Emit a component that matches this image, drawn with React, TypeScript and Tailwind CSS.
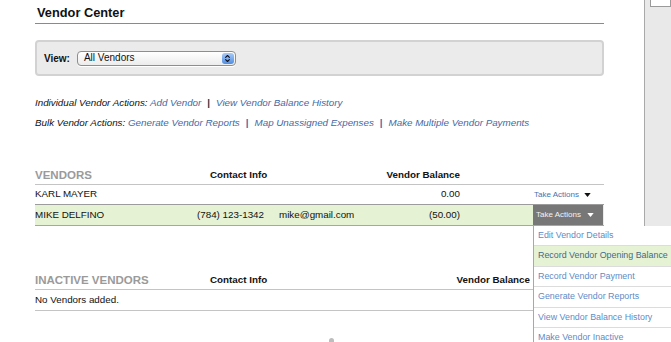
import { ChevronsUpDown } from 'lucide-react';

const font = { fontFamily: '"Liberation Sans", Arial, sans-serif' };

function Caret({ className }: { className: string }) {
    return (
        <svg viewBox="0 0 8 5" className={className}>
            <path d="M0 0 L8 0 L4 5 Z" fill="currentColor" />
        </svg>
    );
}

const menuItems = [
    'Edit Vendor Details',
    'Record Vendor Opening Balance',
    'Record Vendor Payment',
    'Generate Vendor Reports',
    'View Vendor Balance History',
    'Make Vendor Inactive',
];

export default function App() {
    return (
        <div className="flex w-[671px] h-[342px] overflow-hidden bg-white text-[#111]" style={font}>
            {/* Main column */}
            <div className="w-[644px] shrink-0 pl-[35px] pr-[40px]">
                <div className="h-[24px] border-b border-[#8a8a8a] pt-[5px] pl-[2px] text-[12.8px] font-bold leading-[16px]">
                    Vendor Center
                </div>

                <div className="mt-[16px] h-[36px] rounded-[4px] border-2 border-[#d2d2d2] bg-[#ebebeb] flex items-center pl-[7px] gap-[7px]">
                    <span className="text-[10px] font-bold">View:</span>
                    <div className="h-[15px] w-[159px] rounded-[4px] border border-[#8e8e8e] bg-gradient-to-b from-white to-[#ececec] flex items-center justify-between pl-[6px] pr-[1px] shadow-[0_1px_0_#fff]">
                        <span className="text-[10px] leading-none">All Vendors</span>
                        <span className="h-[11px] w-[12px] rounded-[3px] bg-gradient-to-b from-[#a9c9f5] to-[#4f8de0] flex items-center justify-center text-[#112]">
                            <ChevronsUpDown className="w-[9px] h-[9px]" strokeWidth={3} />
                        </span>
                    </div>
                </div>

                <div className="mt-[17px] text-[9.8px] italic leading-[20px] whitespace-nowrap">
                    <div>
                        Individual Vendor Actions: <span className="text-[#3f6aa6]">Add Vendor</span>
                        <span className="mx-[6px] not-italic font-bold text-[#333]">|</span>
                        <span className="text-[#3f6aa6]">View Vendor Balance History</span>
                    </div>
                    <div>
                        Bulk Vendor Actions: <span className="text-[#3f6aa6]">Generate Vendor Reports</span>
                        <span className="mx-[6px] not-italic font-bold text-[#3f6aa6]">|</span>
                        <span className="text-[#3f6aa6]">Map Unassigned Expenses</span>
                        <span className="mx-[6px] not-italic font-bold text-[#3f6aa6]">|</span>
                        <span className="text-[#3f6aa6]">Make Multiple Vendor Payments</span>
                    </div>
                </div>

                {/* Vendors table */}
                <div className="mt-[34px] text-[9.8px] whitespace-nowrap">
                    <div className="h-[18px] flex items-center border-b border-[#c4c4c4]">
                        <div className="w-[162px] text-[11.5px] font-bold text-[#9a9a9a]">VENDORS</div>
                        <div className="w-[190px] pl-[13px] font-bold">Contact Info</div>
                        <div className="w-[73px] flex justify-end font-bold">Vendor Balance</div>
                    </div>
                    <div className="h-[20px] flex items-center border-b border-[#9c9c9c]">
                        <div className="w-[162px]">KARL MAYER</div>
                        <div className="w-[190px]" />
                        <div className="w-[73px] text-right">0.00</div>
                        <div className="w-[73px]" />
                        <div className="w-[70px] flex items-center pl-[1px] text-[8px] text-[#4a72ad]">
                            Take Actions
                            <Caret className="ml-[5px] w-[7px] h-[4px] text-[#111]" />
                        </div>
                    </div>
                    <div className="h-[21px] flex items-center border-b border-[#a6a6a6] bg-[#e6f2d4]">
                        <div className="w-[162px]">MIKE DELFINO</div>
                        <div className="w-[190px] flex gap-[15px]">
                            <span>(784) 123-1342</span>
                            <span>mike@gmail.com</span>
                        </div>
                        <div className="w-[73px] text-right">(50.00)</div>
                        <div className="w-[73px]" />
                        <div className="relative w-[70px] h-full">
                            <div className="h-full bg-[#777777] flex items-center pl-[3px] text-[8px] text-[#f2f2f2]">
                                Take Actions
                                <Caret className="ml-[6px] w-[7px] h-[4px] text-white" />
                            </div>
                            <div className="absolute left-0 top-[21px] w-[150px] bg-white border-l border-[#a8a8a8] z-10">
                                {menuItems.map((item, i) => (
                                    <div
                                        key={item}
                                        className={`h-[20.4px] flex items-center pl-[4px] text-[8.9px] border-b border-[#dcdcdc] ${
                                            i === 1 ? 'bg-[#e6f2d4] text-[#3f6a8a]' : 'text-[#5f8bc6]'
                                        }`}
                                    >
                                        {item}
                                    </div>
                                ))}
                            </div>
                        </div>
                    </div>
                </div>

                {/* Inactive vendors table */}
                <div className="mt-[46px] text-[9.8px] whitespace-nowrap">
                    <div className="h-[18px] flex items-center border-b border-[#c4c4c4]">
                        <div className="w-[162px] text-[11.5px] font-bold text-[#9a9a9a]">INACTIVE VENDORS</div>
                        <div className="w-[190px] pl-[13px] font-bold">Contact Info</div>
                        <div className="w-[146px] pr-[3px] text-right font-bold">Vendor Balance</div>
                    </div>
                    <div className="h-[21px] flex items-center border-b border-[#c4c4c4]">No Vendors added.</div>
                </div>

                <div className="mt-[27px] ml-[294px] w-[5px] h-[4px] rounded-t-full bg-[#bdbdbd]" />
            </div>

            {/* Right sidebar */}
            <div className="flex-1 border-l border-[#a9a9a9] bg-[#e9e9e9] pl-[5px]">
                <div className="h-[7px] border border-t-0 border-[#9a9a9a] bg-white" />
            </div>
        </div>
    );
}
